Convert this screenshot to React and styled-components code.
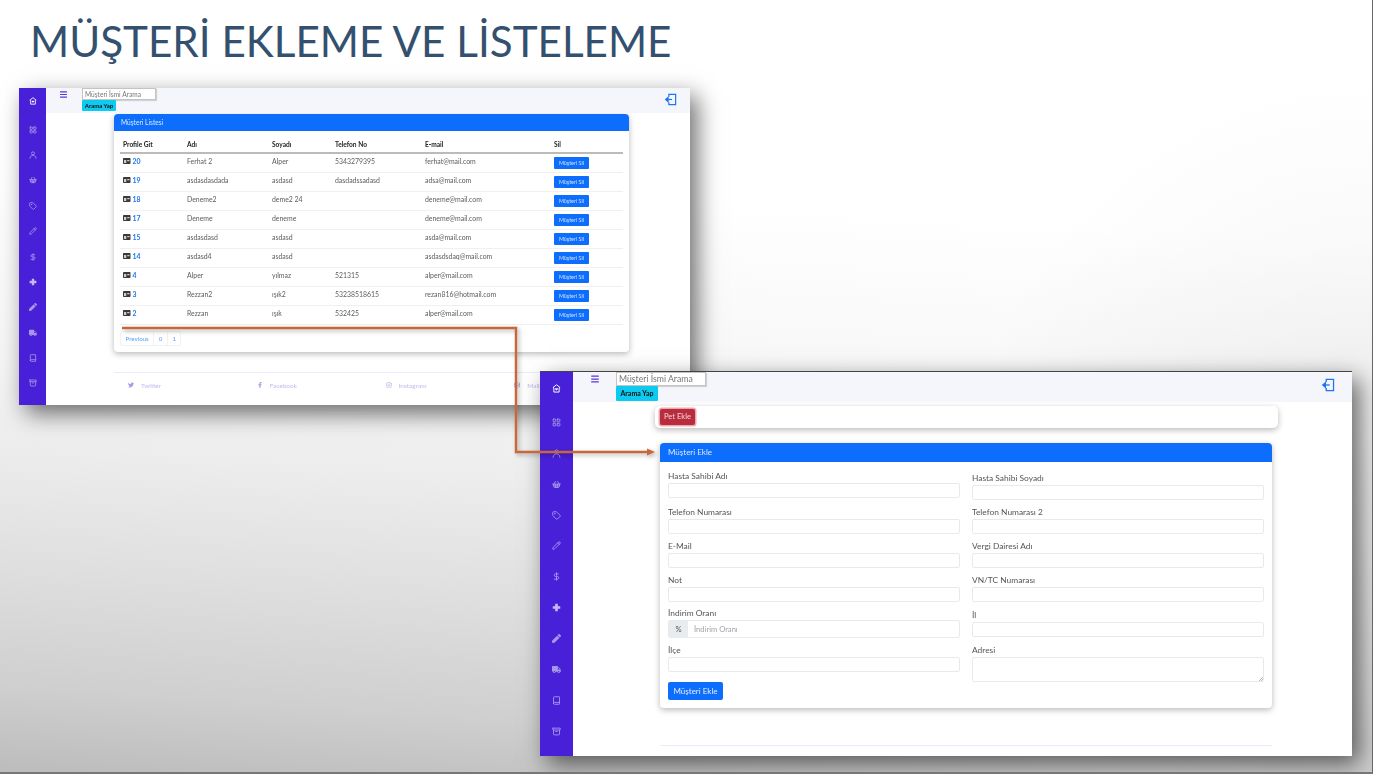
import styled, { createGlobalStyle } from "styled-components"
import { LayoutGrid, ShoppingBasket, Tag, Pencil, DollarSign, Book, Archive, Menu } from "lucide-react"
import { FaPen, FaTruck, FaTwitter, FaFacebookF, FaInstagram, FaRegEnvelope } from "react-icons/fa"

const GlobalStyle = createGlobalStyle`
  html, body { margin: 0; padding: 0; }
  body { font-family: "Lato", "Liberation Sans", sans-serif; }
  * { box-sizing: border-box; }
`

const Slide = styled.div`
  position: relative;
  width: 1373px;
  height: 774px;
  overflow: hidden;
  background:
    radial-gradient(circle at 100% 62%, rgba(0,0,0,0.05), rgba(0,0,0,0) 28%),
    linear-gradient(184deg, #ffffff 0%, #ffffff 28%, #f5f5f5 52%, #ededed 62%, #dfdfdf 76%, #cfcfcf 90%, #bcbcbc 100%);
  border-right: 1px solid #666;
  border-bottom: 2px solid #777;
`

const Title = styled.h1`
  margin: 0;
  padding: 16px 0 0 30px;
  font-family: "Lato", sans-serif;
  font-weight: 400;
  font-size: 42.2px;
  line-height: 50px;
  letter-spacing: 0;
  color: #34506f;
`

const Window = styled.div`
  position: absolute;
  left: ${p => p.$x}px;
  top: ${p => p.$y}px;
  width: ${p => p.$w}px;
  height: ${p => p.$h}px;
  display: flex;
  background: #fff;
  overflow: hidden;
  box-shadow: 7px 8px 22px rgba(0, 0, 0, 0.58);
  filter: blur(${p => p.$blur}px);
`

const WindowTwo = styled(Window)`
  border-top: 1px solid #444;
`

const Sidebar = styled.nav`
  flex: none;
  width: ${p => p.$w}px;
  background: #4820d8;
  color: #a898ec;
  display: flex;
  flex-direction: column;
  align-items: center;
  padding-top: ${p => p.$pad}px;
`

const NavItem = styled.div`
  height: ${p => p.$step}px;
  flex: none;
  display: flex;
  align-items: center;
  justify-content: center;
  color: ${p => (p.$active ? "#fff" : "inherit")};
  margin-bottom: ${p => (p.$active ? p.$first : 0)}px;
`

const Main = styled.div`
  flex: 1;
  min-width: 0;
  display: flex;
  flex-direction: column;
`

const TopBar = styled.header`
  flex: none;
  position: relative;
  height: ${p => p.$h}px;
  background: #f5f6fb;
  display: flex;
  align-items: flex-start;
  padding: ${p => p.$pt}px ${p => p.$pr}px 0 ${p => p.$pl}px;
`

const MenuBtn = styled.div`
  color: #5a34dc;
  width: ${p => p.$w}px;
  flex: none;
  display: flex;
  padding-top: ${p => p.$pt}px;
`

const SearchBox = styled.div`
  display: flex;
  flex-direction: column;
  align-items: flex-start;
`

const SearchInput = styled.div`
  width: ${p => p.$w}px;
  height: ${p => p.$h}px;
  line-height: ${p => p.$h - 2}px;
  border: 1px solid #c4c4c4;
  box-shadow: 1px 1px 1px rgba(0, 0, 0, 0.15);
  background: #fff;
  color: #777;
  font-size: ${p => p.$fs}px;
  padding-left: 2px;
  white-space: nowrap;
`

const SearchBtn = styled.div`
  background: #0dcaf0;
  color: #111;
  font-weight: 700;
  font-size: ${p => p.$fs}px;
  height: ${p => p.$h}px;
  line-height: ${p => p.$h}px;
  width: ${p => p.$w}px;
  text-align: center;
  border-radius: 1px;
  white-space: nowrap;
`

const LogoutBtn = styled.div`
  margin-left: auto;
  color: #1f74ef;
  display: flex;
  padding-top: ${p => p.$pt}px;
`

const Card = styled.section`
  background: #fff;
  border-radius: 4px;
  width: ${p => p.$w}px;
  margin-left: ${p => p.$ml}px;
  margin-top: ${p => p.$mt}px;
  flex: none;
  box-shadow: 0 2px 6px rgba(0, 0, 0, 0.28);
  overflow: hidden;
`

const CardHead = styled.div`
  background: #0d6efd;
  color: #dce8ff;
  height: ${p => p.$h}px;
  line-height: ${p => p.$h}px;
  font-size: ${p => p.$fs}px;
  padding-left: ${p => p.$pl}px;
`

const ListBody = styled.div`
  padding: 6px 6px 6px;
`

const Table = styled.table`
  width: 503px;
  table-layout: fixed;
  border-collapse: collapse;
  font-size: 6.9px;
  color: #5c5c5c;
`

const Th = styled.th`
  width: ${p => p.$w}px;
  height: 16px;
  text-align: left;
  font-weight: 700;
  font-size: 6.6px;
  color: #222;
  padding: 0 0 1px 3px;
  border-bottom: 2px solid #bbb;
`

const Td = styled.td`
  height: 19px;
  padding: 0 0 4px 3px;
  white-space: nowrap;
  border-bottom: 1px solid #f0f0f0;
`

const ProfileLink = styled.span`
  display: inline-flex;
  align-items: center;
  gap: 2px;
  color: #1f74ef;
  font-weight: 700;
`

const IdIcon = styled.svg`
  width: 7.5px;
  height: 6px;
  flex: none;
`

const RowBtn = styled.div`
  width: 35px;
  height: 12px;
  line-height: 12px;
  margin-top: 2px;
  margin-bottom: -2px;
  text-align: center;
  background: #0d6efd;
  color: #cfe0ff;
  font-size: 5.4px;
  border-radius: 1px;
`

const Pager = styled.div`
  display: inline-flex;
  margin-top: 6px;
  height: 15px;
  border: 1px solid #f0f2f5;
  border-radius: 2px;
  font-size: 6.2px;
  color: #5b9dfd;
`

const PageItem = styled.div`
  padding: 0 ${p => p.$px}px;
  line-height: 13px;
  & + & { border-left: 1px solid #f0f2f5; }
`

const Footer = styled.footer`
  width: ${p => p.$w}px;
  margin-left: ${p => p.$ml}px;
  margin-top: ${p => p.$mt}px;
  border-top: 1px solid #e6eefb;
  display: grid;
  grid-template-columns: repeat(4, 1fr);
  padding-top: 9px;
  font-size: 6.5px;
  color: #c3bcee;
`

const FooterItem = styled.div`
  display: flex;
  align-items: center;
  gap: 7px;
  padding-left: 14px;
  svg { color: #a89ee6; }
`

const PetBar = styled(Card)`
  height: 22px;
  border-radius: 5px;
  padding: 3px 5px;
`

const PetBtn = styled.div`
  width: 35px;
  height: 15.5px;
  line-height: 15.5px;
  text-align: center;
  background: #b92c3e;
  color: #f3d4d8;
  font-size: 7.6px;
  border-radius: 2px;
  box-shadow: 0 0 0 1.5px #eba7b0;
`

const FormGrid = styled.div`
  display: grid;
  grid-template-columns: 292px 292px;
  column-gap: 12px;
  padding: 0 8px;
  height: 246px;
`

const FormCol = styled.div`
  display: flex;
  flex-direction: column;
  padding-top: ${p => p.$pt}px;
`

const Label = styled.label`
  height: ${p => p.$h || 19}px;
  margin-top: ${p => p.$mt || 0}px;
  display: flex;
  align-items: flex-end;
  font-size: 8.4px;
  line-height: 14px;
  color: #555;
`

const Input = styled.div`
  height: 15px;
  flex: none;
  border: 1px solid #e7e9ec;
  border-radius: 2px;
  background: #fff;
`

const TextArea = styled(Input)`
  height: 25px;
  position: relative;
`

const ResizeGrip = styled.svg`
  position: absolute;
  right: 0;
  bottom: 0;
  width: 5px;
  height: 5px;
`

const InputGroup = styled.div`
  height: 18px;
  flex: none;
  display: flex;
  border: 1px solid #e7e9ec;
  border-radius: 2px;
  overflow: hidden;
`

const GroupAddon = styled.div`
  width: 19px;
  flex: none;
  background: #e9ecef;
  color: #555;
  font-size: 7.6px;
  line-height: 16px;
  text-align: center;
`

const GroupField = styled.div`
  flex: 1;
  color: #a0a4a9;
  font-size: 7.6px;
  line-height: 16px;
  padding-left: 6px;
`

const SubmitBtn = styled.div`
  width: 55px;
  height: 18px;
  line-height: 18px;
  margin-top: 10px;
  text-align: center;
  background: #0d6efd;
  color: #e6efff;
  font-size: 8px;
  border-radius: 2px;
`

const Connector = styled.svg`
  position: absolute;
  left: 0;
  top: 0;
  width: 1373px;
  height: 774px;
  pointer-events: none;
  overflow: visible;
  filter: drop-shadow(2px 2px 2px rgba(0, 0, 0, 0.3));
`

const rows = [
  ["20", "Ferhat 2", "Alper", "5343279395", "ferhat@mail.com"],
  ["19", "asdasdasdada", "asdasd", "dasdadssadasd", "adsa@mail.com"],
  ["18", "Deneme2", "deme2 24", "", "deneme@mail.com"],
  ["17", "Deneme", "deneme", "", "deneme@mail.com"],
  ["15", "asdasdasd", "asdasd", "", "asda@mail.com"],
  ["14", "asdasd4", "asdasd", "", "asdasdsdaq@mail.com"],
  ["4", "Alper", "yılmaz", "521315", "alper@mail.com"],
  ["3", "Rezzan2", "ışık2", "53238518615", "rezan816@hotmail.com"],
  ["2", "Rezzan", "ışık", "532425", "alper@mail.com"],
]

const HomeHeart = ({ size }) => (
  <svg width={size} height={size} viewBox="0 0 24 24" fill="none" stroke="currentColor" strokeWidth="2.6">
    <path d="M12 2 2.500 9.500 5 10.500V21.500H19V10.500L21.500 9.500z" strokeLinejoin="round" />
    <path d="M12 17.500 8 13.500c-1-2 2.500-3.500 4-1.500 1.500-2 5-.5 4 1.500z" fill="currentColor" stroke="none" />
  </svg>
)

const UserArc = ({ size }) => (
  <svg width={size} height={size} viewBox="0 0 24 24" fill="none" stroke="currentColor" strokeWidth="2.4">
    <circle cx="12" cy="7" r="4.500" />
    <path d="M3 22c0-6 4-9 9-9s9 3 9 9" strokeLinecap="round" />
  </svg>
)

const FatPlus = ({ size }) => (
  <svg width={size} height={size} viewBox="0 0 24 24" fill="#c4b9f4">
    <path d="M8.500 2h7v6.500H22v7h-6.500V22h-7v-6.500H2v-7h6.500z" />
  </svg>
)

const navIcons = [HomeHeart, LayoutGrid, UserArc, ShoppingBasket, Tag, Pencil, DollarSign, FatPlus, FaPen, FaTruck, Book, Archive]

const Nav = ({ w, step, pad, first, size }) => (
  <Sidebar $w={w} $pad={pad}>
    {navIcons.map((Icon, i) => (
      <NavItem key={i} $step={step} $active={i === 0} $first={first}>
        <Icon size={size} strokeWidth={2.4} />
      </NavItem>
    ))}
  </Sidebar>
)

const LogoutIcon = ({ size }) => (
  <svg width={size} height={size} viewBox="0 0 24 24" fill="none" stroke="currentColor" strokeWidth="2.2">
    <path d="M9 7V2.500h12.500v19H9V17" />
    <path d="M15 12H5" />
    <path d="M7.500 8 3 12l4.500 4z" fill="currentColor" />
  </svg>
)

const ListWindow = () => (
  <Window $x={19} $y={88} $w={671} $h={317} $blur={0.5}>
    <Nav w={27} step={25.4} pad={0.5} first={3} size={8} />
    <Main>
      <TopBar $h={25} $pt={0} $pr={13} $pl={13}>
        <MenuBtn $w={23} $pt={2}><Menu size={9} strokeWidth={3} /></MenuBtn>
        <SearchBox>
          <SearchInput $w={74} $h={12} $fs={6.6}>Müşteri İsmi Arama</SearchInput>
          <SearchBtn $w={34} $h={11} $fs={6}>Arama Yap</SearchBtn>
        </SearchBox>
        <LogoutBtn $pt={5}><LogoutIcon size={13} /></LogoutBtn>
      </TopBar>
      <Card $w={515} $ml={68} $mt={1}>
        <CardHead $h={17} $fs={6.6} $pl={7}>Müşteri Listesi</CardHead>
        <ListBody>
          <Table>
            <thead>
              <tr>
                <Th $w={64}>Profile Git</Th>
                <Th $w={85}>Adı</Th>
                <Th $w={63}>Soyadı</Th>
                <Th $w={90}>Telefon No</Th>
                <Th $w={129}>E-mail</Th>
                <Th>Sil</Th>
              </tr>
            </thead>
            <tbody>
              {rows.map(r => (
                <tr key={r[0]}>
                  <Td>
                    <ProfileLink>
                      <IdIcon viewBox="0 0 15 12">
                        <rect width="15" height="12" rx="1.500" fill="#3a3a3a" />
                        <rect x="2" y="4" width="4.500" height="6" fill="#cfcfcf" />
                        <rect x="8.500" y="4" width="4.500" height="2.500" fill="#cfcfcf" />
                      </IdIcon>
                      {r[0]}
                    </ProfileLink>
                  </Td>
                  <Td>{r[1]}</Td>
                  <Td>{r[2]}</Td>
                  <Td>{r[3]}</Td>
                  <Td>{r[4]}</Td>
                  <Td><RowBtn>Müşteri Sil</RowBtn></Td>
                </tr>
              ))}
            </tbody>
          </Table>
          <Pager>
            <PageItem $px={4.5}>Previous</PageItem>
            <PageItem $px={4.5}>0</PageItem>
            <PageItem $px={4.5}>1</PageItem>
          </Pager>
        </ListBody>
      </Card>
      <Footer $w={515} $ml={68} $mt={20}>
        <FooterItem><FaTwitter size={6} />Twitter</FooterItem>
        <FooterItem><FaFacebookF size={6} />Facebook</FooterItem>
        <FooterItem><FaInstagram size={6} />Instagram</FooterItem>
        <FooterItem><FaRegEnvelope size={6} />Mail</FooterItem>
      </Footer>
    </Main>
  </Window>
)

const FormWindow = () => (
  <WindowTwo $x={540} $y={371} $w={812} $h={385} $blur={0.3}>
    <Nav w={33} step={30.9} pad={1} first={3} size={9} />
    <Main>
      <TopBar $h={30} $pt={0} $pr={17} $pl={17}>
        <MenuBtn $w={26} $pt={2}><Menu size={10} strokeWidth={3} /></MenuBtn>
        <SearchBox>
          <SearchInput $w={90} $h={14} $fs={8.7}>Müşteri İsmi Arama</SearchInput>
          <SearchBtn $w={42} $h={15} $fs={7}>Arama Yap</SearchBtn>
        </SearchBox>
        <LogoutBtn $pt={6}><LogoutIcon size={14} /></LogoutBtn>
      </TopBar>
      <PetBar $w={623} $ml={82} $mt={4}>
        <PetBtn>Pet Ekle</PetBtn>
      </PetBar>
      <Card $w={612} $ml={87} $mt={15}>
        <CardHead $h={19} $fs={8} $pl={8}>Müşteri Ekle</CardHead>
        <FormGrid>
          <FormCol $pt={2}>
            <Label>Hasta Sahibi Adı</Label>
            <Input />
            <Label $mt={2}>Telefon Numarası</Label>
            <Input />
            <Label>E-Mail</Label>
            <Input />
            <Label>Not</Label>
            <Input />
            <Label $h={18}>İndirim Oranı</Label>
            <InputGroup>
              <GroupAddon>%</GroupAddon>
              <GroupField>İndirim Oranı</GroupField>
            </InputGroup>
            <Label>İlçe</Label>
            <Input />
            <SubmitBtn>Müşteri Ekle</SubmitBtn>
          </FormCol>
          <FormCol $pt={4}>
            <Label>Hasta Sahibi Soyadı</Label>
            <Input />
            <Label>Telefon Numarası 2</Label>
            <Input />
            <Label>Vergi Dairesi Adı</Label>
            <Input />
            <Label>VN/TC Numarası</Label>
            <Input />
            <Label $h={20}>İl</Label>
            <Input />
            <Label $h={20}>Adresi</Label>
            <TextArea>
              <ResizeGrip viewBox="0 0 5 5">
                <path d="M1 5 5 1M3 5 5 3" stroke="#888" strokeWidth="0.6" />
              </ResizeGrip>
            </TextArea>
          </FormCol>
        </FormGrid>
      </Card>
      <Footer $w={612} $ml={87} $mt={37} />
    </Main>
  </WindowTwo>
)

export default function App() {
  return (
    <Slide>
      <GlobalStyle />
      <Title>MÜŞTERİ EKLEME VE LİSTELEME</Title>
      <ListWindow />
      <FormWindow />
      <Connector viewBox="0 0 1373 774">
        <path d="M122 328H516V452H648" fill="none" stroke="#c8673a" strokeWidth="2.400" />
        <path d="M647 448.500 655 452l-8 3.500z" fill="#c8673a" />
      </Connector>
    </Slide>
  )
}
